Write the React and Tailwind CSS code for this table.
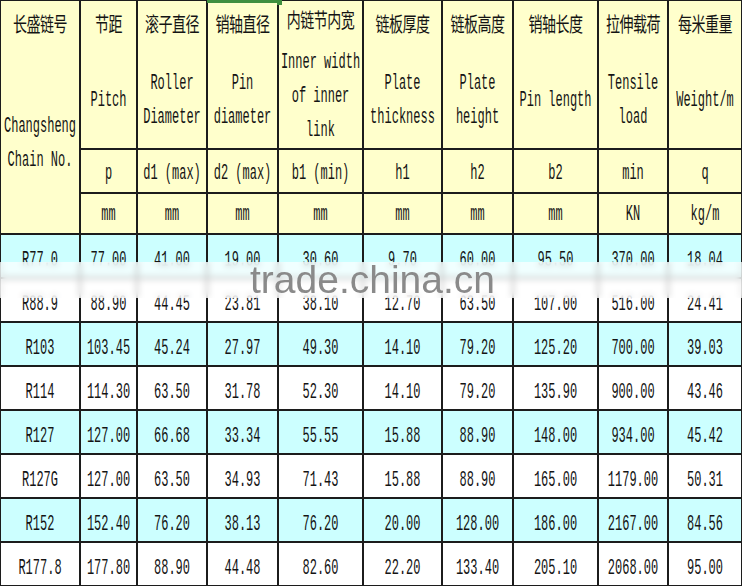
import React from 'react';

const cols = [80, 57, 70, 71, 85, 79, 71, 85, 70, 74];

const heads = [
  { zh: '节距', en: ['Pitch'], sym: 'p', unit: 'mm' },
  { zh: '滚子直径', en: ['Roller', 'Diameter'], sym: 'd1 (max)', unit: 'mm' },
  { zh: '销轴直径', en: ['Pin', 'diameter'], sym: 'd2 (max)', unit: 'mm' },
  { zh: '内链节内宽', en: ['Inner width', 'of inner', 'link'], sym: 'b1 (min)', unit: 'mm' },
  { zh: '链板厚度', en: ['Plate', 'thickness'], sym: 'h1', unit: 'mm' },
  { zh: '链板高度', en: ['Plate', 'height'], sym: 'h2', unit: 'mm' },
  { zh: '销轴长度', en: ['Pin length'], sym: 'b2', unit: 'mm' },
  { zh: '拉伸载荷', en: ['Tensile', 'load'], sym: 'min', unit: 'KN' },
  { zh: '每米重量', en: ['Weight/m'], sym: 'q', unit: 'kg/m' },
];

const rows = [
  ['R77.0', '77.00', '41.00', '19.00', '30.60', '9.70', '60.00', '95.50', '370.00', '18.04'],
  ['R88.9', '88.90', '44.45', '23.81', '38.10', '12.70', '63.50', '107.00', '516.00', '24.41'],
  ['R103', '103.45', '45.24', '27.97', '49.30', '14.10', '79.20', '125.20', '700.00', '39.03'],
  ['R114', '114.30', '63.50', '31.78', '52.30', '14.10', '79.20', '135.90', '900.00', '43.46'],
  ['R127', '127.00', '66.68', '33.34', '55.55', '15.88', '88.90', '148.00', '934.00', '45.42'],
  ['R127G', '127.00', '63.50', '34.93', '71.43', '15.88', '88.90', '165.00', '1179.00', '50.31'],
  ['R152', '152.40', '76.20', '38.13', '76.20', '20.00', '128.00', '186.00', '2167.00', '84.56'],
  ['R177.8', '177.80', '88.90', '44.48', '82.60', '22.20', '133.40', '205.10', '2068.00', '95.00'],
];

// tall narrow look of the old excel font
const T = ({ children }) => (
  <span className="inline-block scale-y-[1.9] whitespace-pre">{children}</span>
);

const Zh = ({ children }) => (
  <span className="inline-block scale-y-[1.45] text-[14px] font-['Noto_Sans_CJK_SC',sans-serif] tracking-[-0.5px]">
    {children}
  </span>
);

const cell = 'border-2 border-[#1c1c1c] text-center p-0';

export default function App() {
  return (
    <div className="relative w-[742px] h-[586px] overflow-hidden bg-white text-[#141414] font-['Liberation_Mono',monospace] text-[12px]">
      <table className="border-collapse table-fixed w-[744px] -ml-px -mt-px">
        <colgroup>
          {cols.map((w, i) => (
            <col key={i} style={{ width: w }} />
          ))}
        </colgroup>
        <tbody>
          <tr className="h-[148px] bg-[#ffffcc]">
            <td rowSpan={3} className={`${cell} align-top`}>
              <div className="flex flex-col h-[232px]">
                <div className="h-[46px] flex items-center justify-center">
                  <Zh>长盛链号</Zh>
                </div>
                <div className="flex-1 flex flex-col justify-center leading-[34px] pt-[5px]">
                  <div><T>Changsheng</T></div>
                  <div><T>Chain No.</T></div>
                </div>
              </div>
            </td>
            {heads.map((h, i) => (
              <td key={i} className={`${cell} align-top`}>
                <div className="flex flex-col h-[146px]">
                  <div className="h-[46px] flex items-center justify-center">
                    <Zh>{h.zh}</Zh>
                  </div>
                  <div className="flex-1 flex flex-col justify-center leading-[34px] pt-[6px]">
                    {h.en.map((t) => (
                      <div key={t}><T>{t}</T></div>
                    ))}
                  </div>
                </div>
              </td>
            ))}
          </tr>
          <tr className="h-[44px] bg-[#ffffcc]">
            {heads.map((h, i) => (
              <td key={i} className={`${cell} pt-[4px]`}>
                <T>{h.sym}</T>
              </td>
            ))}
          </tr>
          <tr className="h-[41px] bg-[#ffffcc]">
            {heads.map((h, i) => (
              <td key={i} className={`${cell} pt-[2px]`}>
                <T>{h.unit}</T>
              </td>
            ))}
          </tr>
          {rows.map((r, ri) => (
            <tr key={ri} className={`h-[44px] ${ri % 2 === 0 ? 'bg-[#ccffff]' : 'bg-white'}`}>
              {r.map((v, ci) => (
                <td key={ci} className={`${cell} pt-[7px]`}>
                  <T>{v}</T>
                </td>
              ))}
            </tr>
          ))}
        </tbody>
      </table>

      {/* selected cell marker */}
      <div className="absolute left-[207px] top-0 w-[73px] h-[3px] bg-[#3f8f3f]" />
      <div className="absolute left-[277px] top-0 w-[5px] h-[5px] bg-[#3f8f3f]" />

      {/* watermark */}
      <div className="absolute left-0 top-[262px] w-full h-[36px] bg-white/70 backdrop-blur-[3px]" />
      <div className="absolute left-[250px] top-[260px] text-[39px] leading-none text-[#8a8a8a] font-['Liberation_Sans',sans-serif]">
        trade.china.cn
      </div>
    </div>
  );
}
